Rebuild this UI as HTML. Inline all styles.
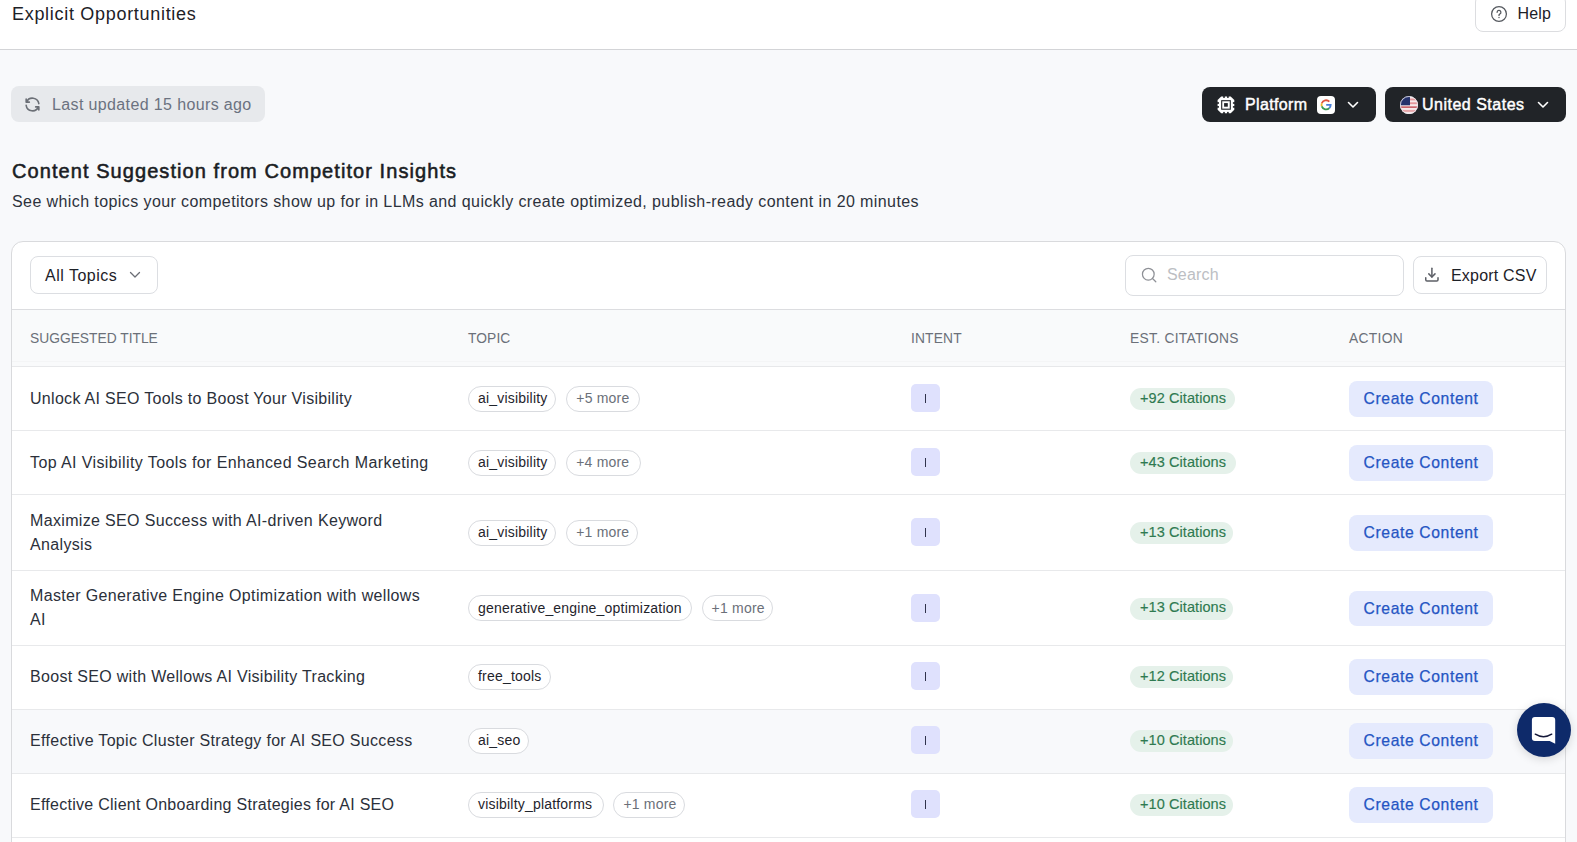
<!DOCTYPE html>
<html><head><meta charset="utf-8">
<style>
*{box-sizing:border-box;margin:0;padding:0}
html,body{width:1577px;height:842px;overflow:hidden}
body{background:#f8f9fb;font-family:"Liberation Sans",sans-serif;position:relative;color:#1d2127}
.a{position:absolute}
.t{position:absolute;white-space:nowrap;line-height:1}
#hdr{left:0;top:0;width:1577px;height:50px;background:#fff;border-bottom:1px solid #d3d4d7}
.btn-dark{background:#212428;border-radius:8px}
.card{left:11px;top:241px;width:1555px;height:700px;background:#fff;border:1px solid #d9dadd;border-radius:12px;overflow:hidden}
.th{top:309px;left:12px;width:1553px;height:58px;background:#f9fafb;border-top:1px solid #dcdde0;border-bottom:1px solid #e7e8ea}
.hx{font-size:13.8px;color:#6b7079;font-weight:400;letter-spacing:0.3px;margin-top:1px}
.row{left:12px;width:1553px;border-bottom:1px solid #e8e9eb;background:#fff}
.title{font-size:16px;color:#2b303a}
.chip{position:absolute;height:26px;border:1px solid #d9dbdf;border-radius:13px;background:#fff}
.chip span{position:absolute;white-space:nowrap;line-height:1;font-size:14px;color:#1f242c;letter-spacing:0.2px}
.chip.more span{color:#6b7079}
.intent{position:absolute;left:911px;width:29px;height:28px;background:#dfe1fd;border-radius:5px}
.intent i{position:absolute;left:14.1px;top:10px;width:1.3px;height:9.4px;background:#30334c}
.cit{position:absolute;left:1130px;height:22px;border-radius:11px;background:#e5f1ea}
.cit span{position:absolute;left:10px;white-space:nowrap;line-height:1;font-size:14.5px;color:#2f7a50;-webkit-text-stroke:0.15px #2f7a50;letter-spacing:0.08px}
.cc{position:absolute;left:1349px;width:144px;height:35.5px;border-radius:8px;background:#e5eafd}
.cc span{position:absolute;left:14.5px;white-space:nowrap;line-height:1;font-size:15.7px;color:#2455c3;letter-spacing:0.62px;-webkit-text-stroke:0.25px #2455c3}
</style></head><body>

<div id="hdr" class="a"></div>
<div class="t" style="left:12px;top:4.8px;font-size:18px;letter-spacing:0.7px;color:#1d2127">Explicit Opportunities</div>
<!-- Help -->
<div class="a" style="left:1475px;top:-6px;width:91px;height:37.5px;border:1px solid #dcdde0;border-radius:8px;background:#fff"></div>
<svg class="a" style="left:1490px;top:5px" width="18" height="18" viewBox="0 0 18 18"><circle cx="9" cy="9" r="7.4" fill="none" stroke="#55595f" stroke-width="1.25"/><path d="M7.1 7.3a1.9 1.9 0 1 1 2.6 1.8c-.45.25-.7.55-.7 1.05v.3" fill="none" stroke="#55595f" stroke-width="1.3" stroke-linecap="round"/><circle cx="9" cy="12.5" r=".7" fill="#55595f"/></svg>
<div class="t" style="left:1517.5px;top:5.5px;font-size:16px;letter-spacing:0.2px;color:#1d2127">Help</div>

<!-- last updated -->
<div class="a" style="left:11px;top:86px;width:254px;height:36px;background:#e7e9ec;border-radius:8px"></div>
<svg class="a" style="left:22.9px;top:95.3px" width="19" height="19" viewBox="0 0 24 24" fill="none" stroke="#6b6f76" stroke-width="2" stroke-linecap="round" stroke-linejoin="round"><path d="M20 11a8.1 8.1 0 0 0 -15.5 -2m-.5 -4v4h4"/><path d="M4 13a8.1 8.1 0 0 0 15.5 2m.5 4v-4h-4"/></svg>
<div class="t" style="left:52px;top:97.2px;font-size:16px;letter-spacing:0.37px;color:#6b7280">Last updated 15 hours ago</div>

<!-- platform -->
<div class="a btn-dark" style="left:1202px;top:87px;width:174px;height:35px"></div>
<svg class="a" style="left:1217px;top:96px" width="18" height="18" viewBox="0 0 18 18"><path d="M4.2 0.5H13.7L17.3 4.1V13.7L13.7 17.3H4.2L0.6 13.7V4.1Z" fill="#fff"/><g fill="#212428"><rect x="6.2" y="0" width="1.6" height="1.9"/><rect x="10.1" y="0" width="1.6" height="1.9"/><rect x="6.2" y="15.9" width="1.6" height="2.1"/><rect x="10.1" y="15.9" width="1.6" height="2.1"/><rect x="0" y="6.2" width="2" height="1.6"/><rect x="0" y="10.1" width="2" height="1.6"/><rect x="15.9" y="6.2" width="2.1" height="1.6"/><rect x="15.9" y="10.1" width="2.1" height="1.6"/></g><rect x="4.7" y="4.7" width="8.6" height="8.5" fill="none" stroke="#212428" stroke-width="1.1"/><rect x="7.1" y="7.1" width="3.7" height="3.6" fill="#212428"/></svg>
<div class="t" style="left:1245px;top:97px;font-size:16px;font-weight:400;-webkit-text-stroke:0.45px #fff;letter-spacing:0.35px;color:#fff">Platform</div>
<div class="a" style="left:1317px;top:96px;width:18px;height:18px;background:#fff;border-radius:4px"></div>
<svg class="a" style="left:1317px;top:96px" width="18" height="18" viewBox="0 0 18 18" fill="none" stroke-width="1.8"><path d="M12.35 5.6A4.6 4.6 0 0 0 4.78 7.28" stroke="#e0533d"/><path d="M4.78 7.28A4.6 4.6 0 0 0 4.78 10.42" stroke="#f0b429"/><path d="M4.78 10.42A4.6 4.6 0 0 0 12.35 12.1" stroke="#3a9a52"/><path d="M12.35 12.1A4.6 4.6 0 0 0 13.7 8.85H9.2" stroke="#4a7fd8"/></svg>
<svg class="a" style="left:1347px;top:100px" width="12" height="9" viewBox="0 0 12 9"><path d="M1.5 2.5l4.5 4.5 4.5-4.5" fill="none" stroke="#fff" stroke-width="1.6" stroke-linecap="round" stroke-linejoin="round"/></svg>

<!-- US -->
<div class="a btn-dark" style="left:1385px;top:87px;width:181px;height:35px"></div>
<svg class="a" style="left:1400px;top:95.8px" width="18" height="18.2" viewBox="0 0 18 18"><defs><clipPath id="fc"><circle cx="9" cy="9" r="9"/></clipPath></defs><g clip-path="url(#fc)"><rect width="18" height="18" fill="#f6e9ea"/><rect y="2.4" width="18" height="1.9" fill="#e4979c"/><rect y="6.2" width="18" height="1.9" fill="#e4979c"/><rect y="10.2" width="18" height="1.7" fill="#c9646c"/><rect y="13.8" width="18" height="2" fill="#e8a6aa"/><rect width="10" height="9.2" fill="#25326c"/></g><circle cx="9" cy="9" r="8.6" fill="none" stroke="#e9e9f0" stroke-width="0.8"/></svg>
<div class="t" style="left:1422px;top:97px;font-size:16px;font-weight:400;-webkit-text-stroke:0.45px #fff;letter-spacing:0.5px;color:#fff">United States</div>
<svg class="a" style="left:1537px;top:100px" width="12" height="9" viewBox="0 0 12 9"><path d="M1.5 2.5l4.5 4.5 4.5-4.5" fill="none" stroke="#fff" stroke-width="1.6" stroke-linecap="round" stroke-linejoin="round"/></svg>

<!-- headings -->
<div class="t" style="left:12px;top:160.6px;font-size:20px;font-weight:400;-webkit-text-stroke:0.55px #1a1d23;letter-spacing:1.07px;color:#1a1d23">Content Suggestion from Competitor Insights</div>
<div class="t" style="left:12px;top:193.8px;font-size:16px;letter-spacing:0.41px;color:#2d323c">See which topics your competitors show up for in LLMs and quickly create optimized, publish-ready content in 20 minutes</div>

<!-- card -->
<div class="a card"></div>
<div class="a" style="left:30px;top:256px;width:128px;height:38px;border:1px solid #dcdee2;border-radius:8px;background:#fff"></div>
<div class="t" style="left:45px;top:268.3px;font-size:16px;letter-spacing:0.5px;color:#1d2127">All Topics</div>
<svg class="a" style="left:129px;top:270px" width="12" height="9" viewBox="0 0 12 9"><path d="M1.5 2.5l4.5 4.5 4.5-4.5" fill="none" stroke="#6b6e75" stroke-width="1.3" stroke-linecap="round" stroke-linejoin="round"/></svg>

<div class="a" style="left:1125px;top:255px;width:279px;height:41px;border:1px solid #dcdee2;border-radius:8px;background:#fff"></div>
<svg class="a" style="left:1136px;top:262px" width="26" height="26" viewBox="0 0 26 26" fill="none" stroke="#8e9096" stroke-width="1.25" stroke-linecap="round"><circle cx="12.3" cy="12.2" r="5.85"/><path d="M16.5 16.5l3.3 3.3"/></svg>
<div class="t" style="left:1167px;top:267px;font-size:16px;letter-spacing:0.2px;color:#bcbec3">Search</div>

<div class="a" style="left:1413px;top:256px;width:134px;height:38px;border:1px solid #dcdee2;border-radius:8px;background:#fff"></div>
<svg class="a" style="left:1419px;top:262px" width="26" height="26" viewBox="0 0 26 26" fill="none" stroke="#5c5f66" stroke-width="1.5" stroke-linecap="round" stroke-linejoin="round"><path d="M6.75 15.85v1.9a1.25 1.25 0 0 0 1.25 1.25h9.75a1.25 1.25 0 0 0 1.25 -1.25v-1.9"/><path d="M9.8 11.9l3.1 3.1 3.1-3.1"/><path d="M12.9 6.2v8.8"/></svg>
<div class="t" style="left:1451px;top:267.5px;font-size:16px;letter-spacing:0.2px;color:#1d2127">Export CSV</div>

<!-- table header -->
<div class="a th"></div>
<div class="a" style="left:12px;top:361px;width:1553px;height:1px;background:#f4f5f6"></div>
<div class="t hx" style="left:30px;top:331px;letter-spacing:0">SUGGESTED TITLE</div>
<div class="t hx" style="left:468px;top:331px;letter-spacing:0.1px">TOPIC</div>
<div class="t hx" style="left:911px;top:331px;letter-spacing:0.15px">INTENT</div>
<div class="t hx" style="left:1130px;top:331px">EST. CITATIONS</div>
<div class="t hx" style="left:1349px;top:331px">ACTION</div>

<div id="rows">
<div class="a row" style="top:367px;height:64px;background:#fff"></div>
<div class="t title" style="left:30px;top:391.46px;letter-spacing:0.3px">Unlock AI SEO Tools to Boost Your Visibility</div>
<div class="chip" style="left:468.0px;top:385.50px;width:88.4px"><span style="left:9px;top:4.55px">ai_visibility</span></div>
<div class="chip more" style="left:566.3px;top:385.50px;width:73.5px"><span style="left:9px;top:4.55px">+5 more</span></div>
<div class="intent" style="top:384.10px"><i></i></div>
<div class="cit" style="top:388.00px;width:104.6px"><span style="top:2.90px">+92 Citations</span></div>
<div class="cc" style="top:381.00px"><span style="top:10.36px">Create Content</span></div>
<div class="a row" style="top:431px;height:64px;background:#fff"></div>
<div class="t title" style="left:30px;top:455.46px;letter-spacing:0.4px">Top AI Visibility Tools for Enhanced Search Marketing</div>
<div class="chip" style="left:468.0px;top:449.50px;width:88.4px"><span style="left:9px;top:4.55px">ai_visibility</span></div>
<div class="chip more" style="left:566.2px;top:449.50px;width:74.6px"><span style="left:9px;top:4.55px">+4 more</span></div>
<div class="intent" style="top:448.10px"><i></i></div>
<div class="cit" style="top:452.00px;width:105.7px"><span style="top:2.90px">+43 Citations</span></div>
<div class="cc" style="top:445.00px"><span style="top:10.36px">Create Content</span></div>
<div class="a row" style="top:495px;height:76px;background:#fff"></div>
<div class="t title" style="left:30px;top:512.96px;letter-spacing:0.34px">Maximize SEO Success with AI-driven Keyword</div>
<div class="t title" style="left:30px;top:536.56px;letter-spacing:0.34px">Analysis</div>
<div class="chip" style="left:468.0px;top:519.50px;width:88.4px"><span style="left:9px;top:4.55px">ai_visibility</span></div>
<div class="chip more" style="left:566.2px;top:519.50px;width:71.7px"><span style="left:9px;top:4.55px">+1 more</span></div>
<div class="intent" style="top:518.10px"><i></i></div>
<div class="cit" style="top:522.00px;width:103.4px"><span style="top:2.90px">+13 Citations</span></div>
<div class="cc" style="top:515.00px"><span style="top:10.36px">Create Content</span></div>
<div class="a row" style="top:571px;height:75px;background:#fff"></div>
<div class="t title" style="left:30px;top:588.46px;letter-spacing:0.35px">Master Generative Engine Optimization with wellows</div>
<div class="t title" style="left:30px;top:612.06px;letter-spacing:0.35px">AI</div>
<div class="chip" style="left:468.0px;top:595.00px;width:223.7px"><span style="left:9px;top:4.55px">generative_engine_optimization</span></div>
<div class="chip more" style="left:701.6px;top:595.00px;width:71.3px"><span style="left:9px;top:4.55px">+1 more</span></div>
<div class="intent" style="top:593.60px"><i></i></div>
<div class="cit" style="top:597.50px;width:103.4px"><span style="top:2.90px">+13 Citations</span></div>
<div class="cc" style="top:590.50px"><span style="top:10.36px">Create Content</span></div>
<div class="a row" style="top:646px;height:64px;background:#fff"></div>
<div class="t title" style="left:30px;top:669.46px;letter-spacing:0.31px">Boost SEO with Wellows AI Visibility Tracking</div>
<div class="chip" style="left:468.0px;top:663.50px;width:82.8px"><span style="left:9px;top:4.55px">free_tools</span></div>
<div class="intent" style="top:662.10px"><i></i></div>
<div class="cit" style="top:666.00px;width:103.4px"><span style="top:2.90px">+12 Citations</span></div>
<div class="cc" style="top:659.00px"><span style="top:10.36px">Create Content</span></div>
<div class="a row" style="top:710px;height:64px;background:#f8f9fb"></div>
<div class="t title" style="left:30px;top:733.46px;letter-spacing:0.31px">Effective Topic Cluster Strategy for AI SEO Success</div>
<div class="chip" style="left:468.0px;top:727.50px;width:60.7px"><span style="left:9px;top:4.55px">ai_seo</span></div>
<div class="intent" style="top:726.10px"><i></i></div>
<div class="cit" style="top:730.00px;width:103.4px"><span style="top:2.90px">+10 Citations</span></div>
<div class="cc" style="top:723.00px"><span style="top:10.36px">Create Content</span></div>
<div class="a row" style="top:774px;height:64px;background:#fff"></div>
<div class="t title" style="left:30px;top:797.46px;letter-spacing:0.27px">Effective Client Onboarding Strategies for AI SEO</div>
<div class="chip" style="left:468.0px;top:791.50px;width:135.5px"><span style="left:9px;top:4.55px">visibilty_platforms</span></div>
<div class="chip more" style="left:613.4px;top:791.50px;width:71.3px"><span style="left:9px;top:4.55px">+1 more</span></div>
<div class="intent" style="top:790.10px"><i></i></div>
<div class="cit" style="top:794.00px;width:103.4px"><span style="top:2.90px">+10 Citations</span></div>
<div class="cc" style="top:787.00px"><span style="top:10.36px">Create Content</span></div>
<div class="a row" style="top:838px;height:64px;background:#fff"></div>
</div><!--/rows-->

<!-- chat -->
<div class="a" style="left:1517px;top:703px;width:54px;height:54px;border-radius:50%;background:#0e2a6a;box-shadow:0 2px 10px rgba(0,0,0,0.15)"></div>
<svg class="a" style="left:1531px;top:716px" width="26" height="29" viewBox="0 0 26 29"><path d="M3.9 0.9H21.2A3 3 0 0 1 24.2 3.9V27.7L18.7 25.1H3.9A3 3 0 0 1 0.9 22.1V3.9A3 3 0 0 1 3.9 0.9Z" fill="#fff"/><path d="M4.3 18.2Q12.5 23.3 20.7 18.2" fill="none" stroke="#15193a" stroke-width="1.5" stroke-linecap="round"/></svg>

</body></html>
